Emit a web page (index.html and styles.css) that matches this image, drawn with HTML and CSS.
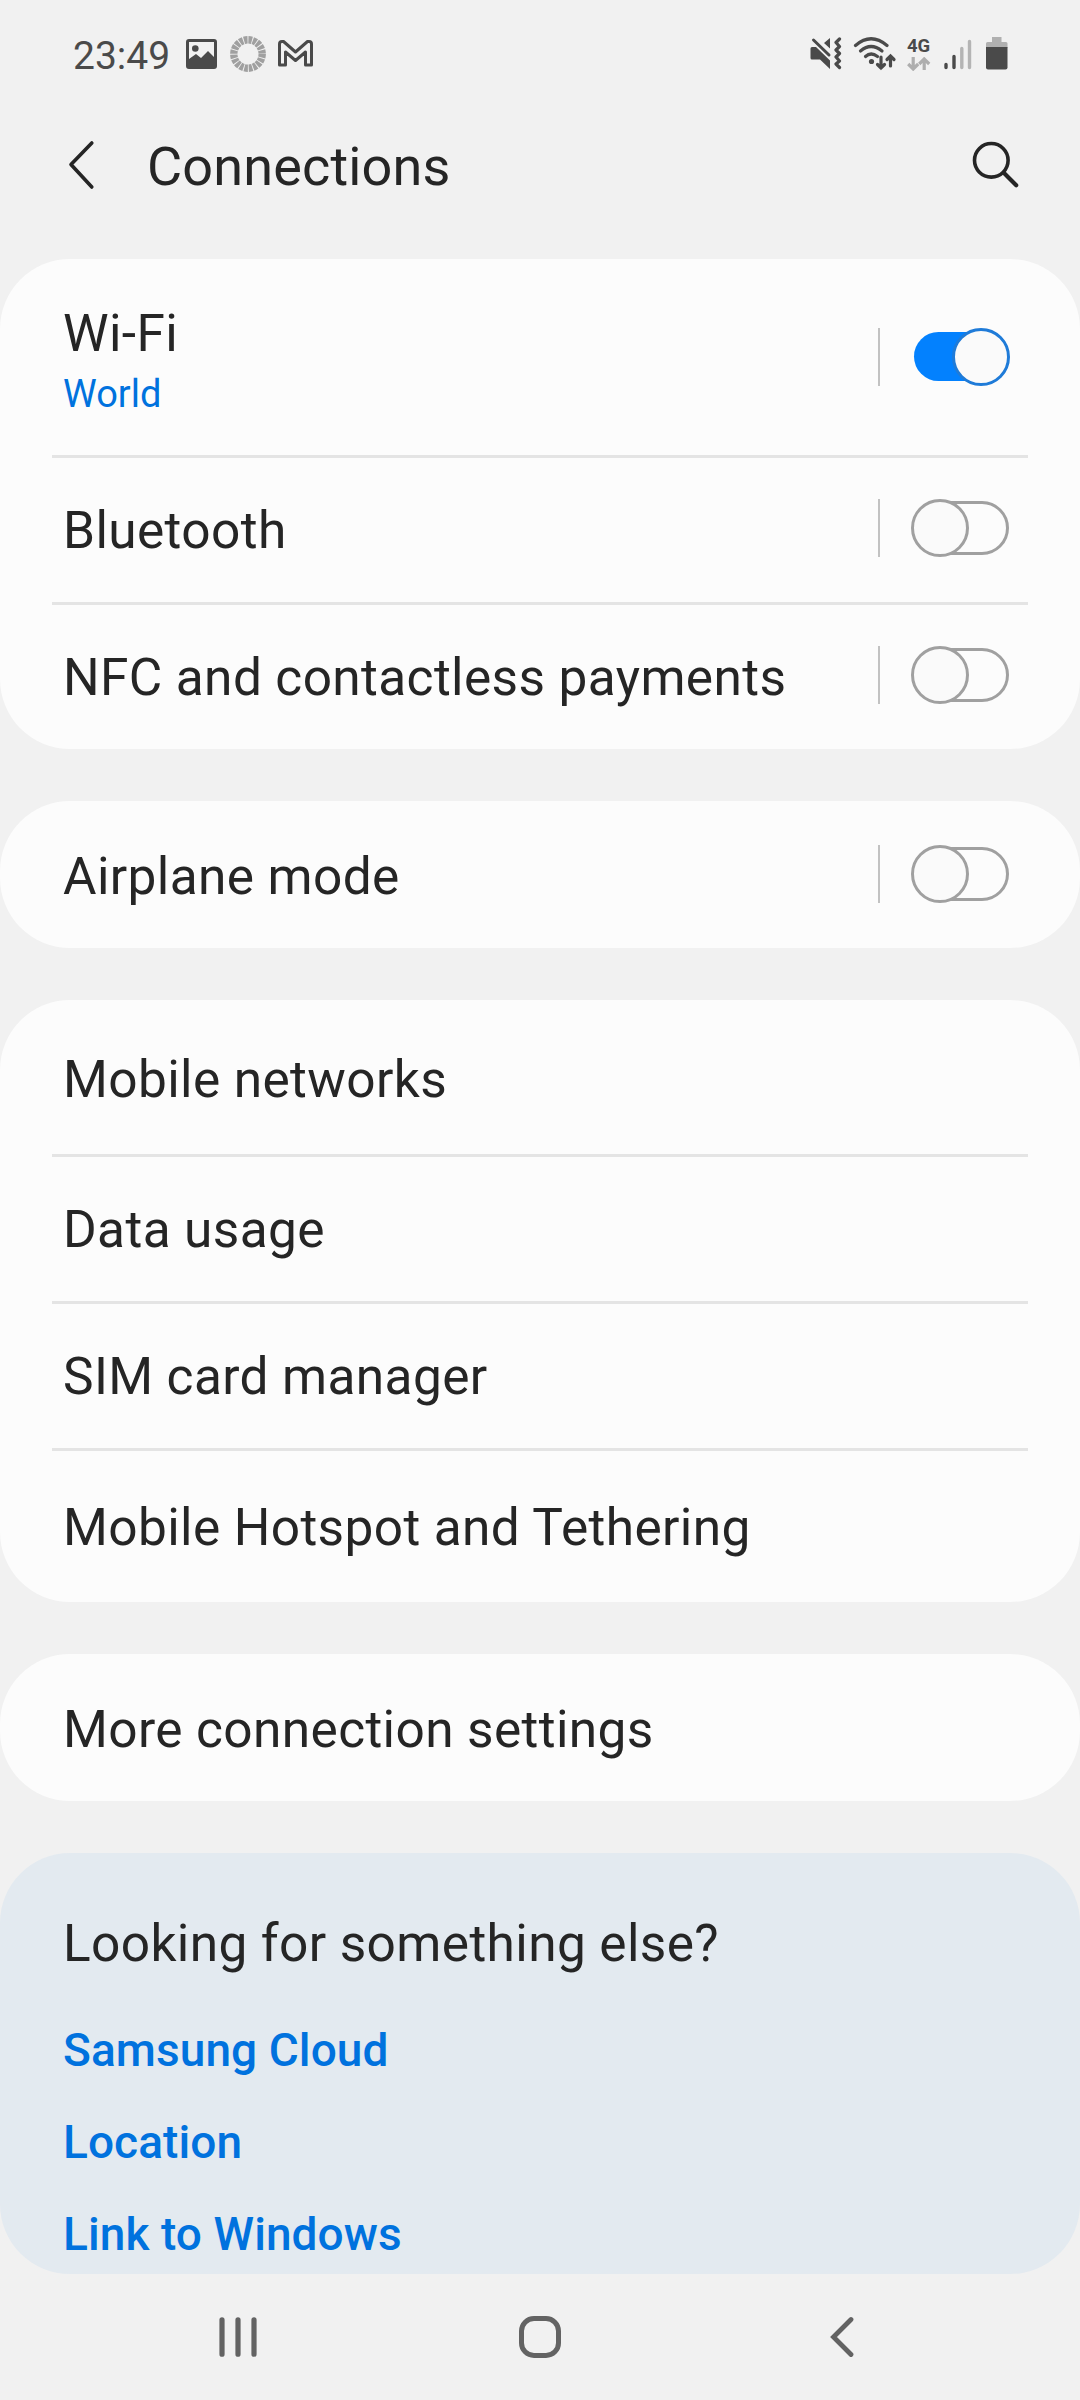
FILE: index.html
```html
<!DOCTYPE html>
<html lang="en">
<head>
    <meta charset="UTF-8">
    <meta name="viewport" content="width=device-width, initial-scale=1.0">
    <title>Connections</title>
    <link rel="stylesheet" href="styles.css">
</head>
<body>
    <!-- Status bar -->
    <div class="status-bar">
        <span class="clock">23:49</span>
        <svg class="icon-picture" width="32" height="31" viewBox="0 0 32 31">
            <path fill="#4a4a4a" fill-rule="evenodd" d="M3 0H28Q31 0 31 3V27Q31 30 28 30H3Q0 30 0 27V3Q0 0 3 0ZM3 3V20L10 15L15 19L22 12L28 18V3Z"/>
            <circle cx="9.300" cy="9.500" r="3.300" fill="#4a4a4a"/>
        </svg>
        <svg class="icon-ring" width="36" height="36" viewBox="0 0 36 36">
            <circle cx="18" cy="18" r="14.200" fill="none" stroke="#a0a0a0" stroke-width="7.400" stroke-dasharray="3.560 0.900"/>
        </svg>
        <svg class="icon-mail" width="36" height="28" viewBox="0 0 36 28">
            <path fill="none" stroke="#4a4a4a" stroke-width="3" stroke-linejoin="round" d="M1.500 25V4Q1.500 1.500 4 1.500H5.500L17.500 12L29.500 1.500H31Q33.500 1.500 33.500 4V25H27.500V12L17.500 20.500L7.500 12V25Z"/>
        </svg>

        <div class="status-right">
            <svg class="icon-mute" width="32" height="33" viewBox="0 0 32 33">
                <path fill="#4a4a4a" d="M2 10H6L20 23.500V32L10 22.500H2Q.5 22.500 .5 21V11.500Q.5 10 2 10ZM20 1V11.500L14 6Z"/>
                <path fill="none" stroke="#4a4a4a" stroke-width="3" stroke-linecap="round" d="M3.500 3L19 18"/>
                <path fill="none" stroke="#4a4a4a" stroke-width="3.200" stroke-linecap="round" stroke-linejoin="round" d="M29.500 2L26 5.500L29.500 9.500L26 13L29.500 16.500L26 20L29.500 24L26 27L29.500 30.500"/>
            </svg>
            <svg class="icon-wifi" width="44" height="34" viewBox="0 0 44 34">
                <g fill="none" stroke="#4a4a4a" stroke-width="3.200" stroke-linecap="round">
                    <path d="M2.500 8.500Q18 -5 34 8.500"/>
                    <path d="M7.500 14Q18 5 29 14"/>
                    <path d="M12.500 19.500Q18 14.500 24.500 19.500"/>
                    <path d="M28 20V31M24.500 27.500L28 31L31.500 27.500M37.500 29V19M34 22.500L37.500 19L41 22.500"/>
                </g>
                <circle cx="18.500" cy="24.500" r="2.600" fill="#4a4a4a"/>
            </svg>
            <div class="network">
                <span class="network-type">4G</span>
                <svg width="24" height="14" viewBox="0 0 24 14">
                    <path fill="none" stroke="#aeaeae" stroke-width="3.200" d="M6.200 0V12M1.200 7L6.200 12L11.200 7M17.200 13V2M12.200 7L17.200 2L22.200 7"/>
                </svg>
            </div>
            <svg class="icon-signal" width="28" height="31" viewBox="0 0 28 31">
                <g fill="none" stroke-width="3.400" stroke-linecap="round">
                    <path stroke="#4a4a4a" d="M2 25.500V28.500M10 17.500V28.500"/>
                    <path stroke="#b4b4b4" d="M17.800 9.500V28.500M25.500 2.500V28.500"/>
                </g>
            </svg>
            <svg class="icon-battery" width="22" height="33" viewBox="0 0 22 33">
                <path fill="#b0b0b0" d="M6 0H15.500V5H20Q21.500 5 21.500 6.500V11H0V6.500Q0 5 1.500 5H6Z"/>
                <path fill="#4a4a4a" d="M0 10H21.500V30.500Q21.500 32.500 19.500 32.500H2Q0 32.500 0 30.500Z"/>
            </svg>
        </div>
    </div>

    <!-- Title bar -->
    <div class="header">
        <svg class="icon-back" width="30" height="50" viewBox="0 0 30 50">
            <path fill="none" stroke="#252525" stroke-width="3.600" stroke-linecap="round" stroke-linejoin="round" d="M23.800 3L3 24.500L23.800 47"/>
        </svg>
        <h1>Connections</h1>
        <svg class="icon-search" width="48" height="48" viewBox="0 0 48 48">
            <g fill="none" stroke="#252525" stroke-linecap="round">
                <circle cx="19.300" cy="19.300" r="16.800" stroke-width="3.600"/>
                <path stroke-width="4.200" d="M32 32L44.200 44.200"/>
            </g>
        </svg>
    </div>

    <!-- Settings list -->
    <div class="card">
        <div class="row row-wifi">
            <div class="row-text">
                <div class="row-title">Wi-Fi</div>
                <div class="row-subtitle">World</div>
            </div>
            <div class="row-switch">
                <svg width="100" height="58" viewBox="0 0 100 58">
                    <rect x="3" y="4" width="80" height="49" rx="24.500" fill="#0381fe"/>
                    <circle cx="70" cy="29" r="27.500" fill="#fafafa" stroke="#1f7bd8" stroke-width="3"/>
                </svg>
            </div>
        </div>
        <div class="row">
            <div class="row-title">Bluetooth</div>
            <div class="row-switch">
                <svg width="100" height="58" viewBox="0 0 100 58">
                    <rect x="3.500" y="3.500" width="93" height="51" rx="25.500" fill="none" stroke="#a0a0a0" stroke-width="3"/>
                    <circle cx="29" cy="29" r="27.500" fill="#fafafa" stroke="#a0a0a0" stroke-width="3"/>
                </svg>
            </div>
        </div>
        <div class="row">
            <div class="row-title">NFC and contactless payments</div>
            <div class="row-switch">
                <svg width="100" height="58" viewBox="0 0 100 58">
                    <rect x="3.500" y="3.500" width="93" height="51" rx="25.500" fill="none" stroke="#a0a0a0" stroke-width="3"/>
                    <circle cx="29" cy="29" r="27.500" fill="#fafafa" stroke="#a0a0a0" stroke-width="3"/>
                </svg>
            </div>
        </div>
    </div>

    <div class="card">
        <div class="row">
            <div class="row-title">Airplane mode</div>
            <div class="row-switch">
                <svg width="100" height="58" viewBox="0 0 100 58">
                    <rect x="3.500" y="3.500" width="93" height="51" rx="25.500" fill="none" stroke="#a0a0a0" stroke-width="3"/>
                    <circle cx="29" cy="29" r="27.500" fill="#fafafa" stroke="#a0a0a0" stroke-width="3"/>
                </svg>
            </div>
        </div>
    </div>

    <div class="card">
        <div class="row row-tall">
            <div class="row-title">Mobile networks</div>
        </div>
        <div class="row">
            <div class="row-title">Data usage</div>
        </div>
        <div class="row">
            <div class="row-title">SIM card manager</div>
        </div>
        <div class="row row-tall">
            <div class="row-title">Mobile Hotspot and Tethering</div>
        </div>
    </div>

    <div class="card">
        <div class="row">
            <div class="row-title">More connection settings</div>
        </div>
    </div>

    <!-- Related links -->
    <div class="card suggestions">
        <div class="row-title">Looking for something else?</div>
        <a class="suggestion-link">Samsung Cloud</a>
        <a class="suggestion-link">Location</a>
        <a class="suggestion-link">Link to Windows</a>
    </div>

    <!-- Navigation bar -->
    <div class="nav-bar">
        <div class="nav-button">
            <svg width="40" height="42" viewBox="0 0 40 42">
                <path fill="none" stroke="#636363" stroke-width="5.200" stroke-linecap="round" d="M4 3.800V38.200M20 3.800V38.200M36 3.800V38.200"/>
            </svg>
        </div>
        <div class="nav-button">
            <svg width="42" height="42" viewBox="0 0 42 42">
                <rect x="2.500" y="2.500" width="37" height="37" rx="12.500" fill="none" stroke="#636363" stroke-width="5"/>
            </svg>
        </div>
        <div class="nav-button">
            <svg width="24" height="42" viewBox="0 0 24 42">
                <path fill="none" stroke="#636363" stroke-width="4.800" stroke-linecap="round" d="M21 3.500L3.500 21L21 38.500"/>
            </svg>
        </div>
    </div>
</body>
</html>
```
FILE: styles.css
```css
/* Basic page styling */
body {
    font-family: Roboto, sans-serif;
    margin: 0;
    width: 1080px;
    height: 2400px;
    background-color: #f1f1f1;
    color: #252525;
    overflow: hidden;
}

svg {
    display: block;
    flex-shrink: 0;
}

/* Status bar */
.status-bar {
    display: flex;
    align-items: flex-start;
    box-sizing: border-box;
    height: 110px;
    padding: 36px 72px 0 73px;
}

.clock {
    width: 113px;
    margin-top: -3px;
    font-size: 39px;
    line-height: 46px;
    color: #4a4a4a;
}

.icon-picture {
    margin-top: 3px;
}

.icon-ring {
    margin: 0 12px;
}

.icon-mail {
    margin-top: 4px;
}

.status-right {
    display: flex;
    align-items: flex-start;
    margin-left: auto;
}

.icon-mute {
    margin: 1px 11px 0 0;
}

.icon-wifi {
    margin: 1px 10px 0 0;
}

.network {
    width: 24px;
    margin-right: 13px;
}

.network-type {
    display: block;
    margin-bottom: 1px;
    font-size: 18.5px;
    font-weight: bold;
    line-height: 20px;
    color: #4a4a4a;
}

.icon-signal {
    margin: 3px 14px 0 0;
}

.icon-battery {
    margin-top: 1px;
}

/* Title bar */
.header {
    display: flex;
    align-items: flex-start;
    box-sizing: border-box;
    height: 149px;
    padding: 25px 60px 0 68px;
}

.icon-back {
    margin: 5px 49px 0 0;
}

h1 {
    margin: 0 auto 0 0;
    font-size: 54px;
    font-weight: normal;
    line-height: 64px;
    letter-spacing: 0.15px;
}

.icon-search {
    margin: 6px 0 0 0;
}

/* Cards */
.card {
    background: #fcfcfc;
    border-radius: 70px;
    margin-bottom: 52px;
    overflow: hidden;
}

.row {
    display: flex;
    align-items: center;
    box-sizing: border-box;
    height: 147px;
    margin: 0 52px;
    padding: 0 17px 0 11px;
    border-top: 3px solid #e4e4e4;
}

.row:first-child {
    border-top-color: transparent;
}

.row-tall {
    height: 154px;
}

.row-wifi {
    height: 196px;
    padding-top: 1px;
}

.row-title {
    padding-top: 2px;
    font-size: 51.4px;
    line-height: 60px;
    letter-spacing: 0.38px;
}

.row-subtitle {
    margin-top: 7px;
    font-size: 38px;
    line-height: 46px;
    color: #0072de;
}

/* Switch with the small separator on its left */
.row-switch {
    margin: -4px 0 0 auto;
    padding-left: 31px;
    border-left: 2px solid #c2c2c2;
}

/* Related links */
.suggestions {
    display: flex;
    flex-direction: column;
    box-sizing: border-box;
    height: 421px;
    margin-bottom: 0;
    padding: 59px 63px 0;
    background: #e3eaf0;
}

.suggestions .row-title {
    margin-bottom: 11px;
}

.suggestion-link {
    margin-top: 38px;
    font-size: 46px;
    font-weight: 500;
    line-height: 54px;
    letter-spacing: 0.08px;
    color: #0072de;
}

/* Navigation bar */
.nav-bar {
    display: flex;
    justify-content: center;
    height: 126px;
}

.nav-button {
    display: flex;
    align-items: center;
    justify-content: center;
    width: 302px;
}
```
